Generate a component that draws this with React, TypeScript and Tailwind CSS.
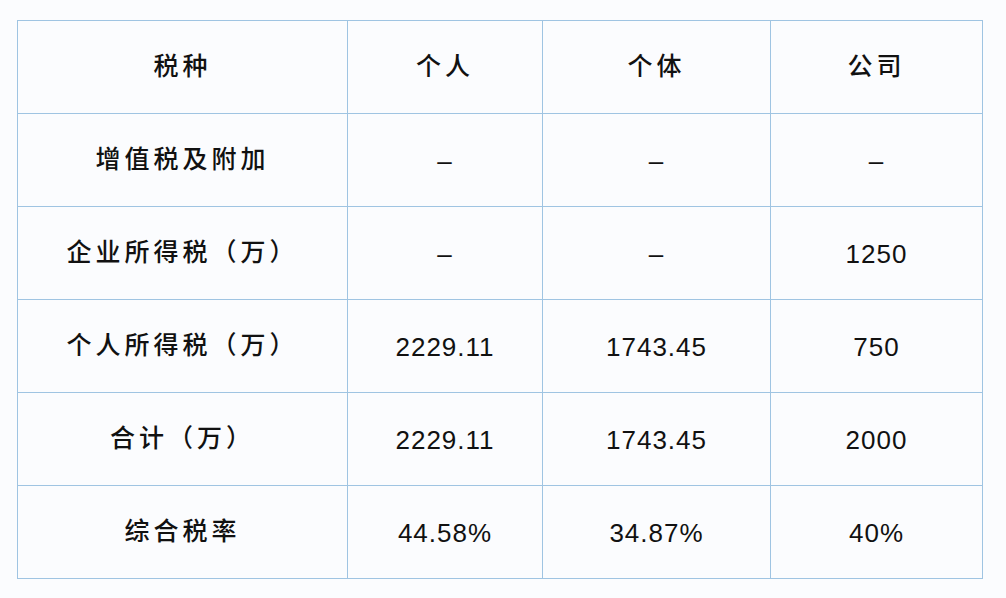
const ROWS: string[][] = [
  ['增值税及附加', '–', '–', '–'],
  ['企业所得税（万）', '–', '–', '1250'],
  ['个人所得税（万）', '2229.11', '1743.45', '750'],
  ['合计（万）', '2229.11', '1743.45', '2000'],
  ['综合税率', '44.58%', '34.87%', '40%'],
];

const HEAD = ['税种', '个人', '个体', '公司'];

const cjk = "font-['Noto_Sans_CJK_SC',sans-serif] font-medium tracking-[4px] pb-[5px]";
const num = "font-['Liberation_Sans',sans-serif] text-[26px] tracking-[1px] pt-[3px]";

export default function App() {
  return (
    <div className="h-[598px] w-[1006px] bg-[#fbfcfe] pl-[17px] pt-[20px] text-[#111]">
      <table className="border-collapse text-[25px]">
        <colgroup>
          <col className="w-[330px]" />
          <col className="w-[195px]" />
          <col className="w-[228px]" />
          <col className="w-[212px]" />
        </colgroup>
        <thead>
          <tr className="h-[93px]">
            {HEAD.map((h) => (
              <th key={h} className={`border border-[#9fc4e2] text-center ${cjk}`}>
                {h}
              </th>
            ))}
          </tr>
        </thead>
        <tbody>
          {ROWS.map((r) => (
            <tr key={r[0]} className="h-[93px]">
              <td className={`border border-[#9fc4e2] text-center ${cjk}`}>{r[0]}</td>
              {r.slice(1).map((v, i) => (
                <td key={i} className={`border border-[#9fc4e2] text-center ${num}`}>
                  {v}
                </td>
              ))}
            </tr>
          ))}
        </tbody>
      </table>
    </div>
  );
}
